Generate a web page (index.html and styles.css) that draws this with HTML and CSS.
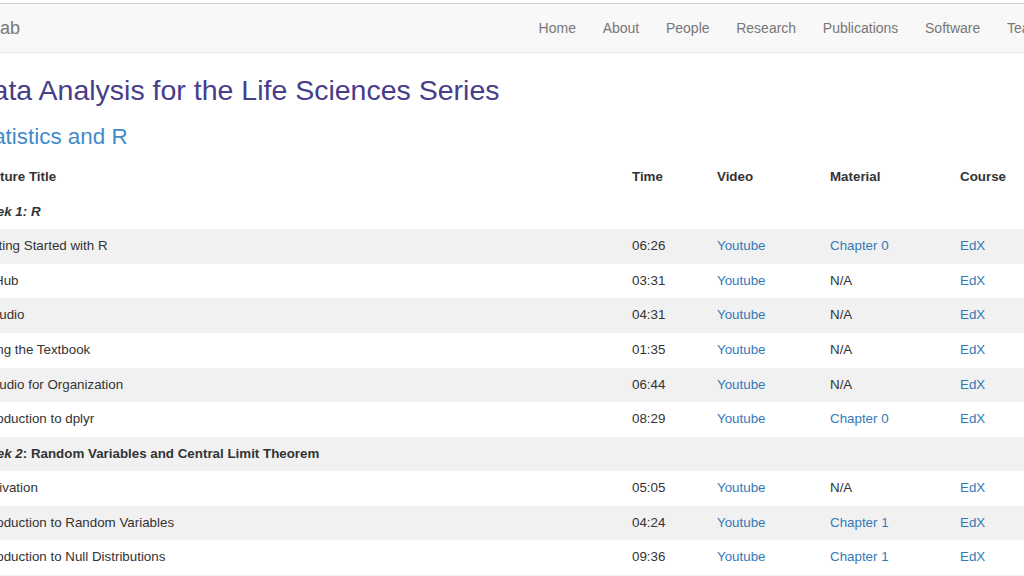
FILE: index.html
```html
<!DOCTYPE html>
<html lang="en">
<head>
<meta charset="utf-8">
<title>Data Analysis for the Life Sciences Series</title>
<link rel="stylesheet" href="styles.css">
</head>
<body>
<nav class="navbar">
  <div class="nav-inner">
    <a class="brand" href="#">Lab</a>
    <ul class="nav">
      <li><a href="#">Home</a></li>
      <li><a href="#">About</a></li>
      <li><a href="#">People</a></li>
      <li><a href="#">Research</a></li>
      <li><a href="#">Publications</a></li>
      <li><a href="#">Software</a></li>
      <li><a href="#">Teaching</a></li>
    </ul>
  </div>
</nav>
<main class="container">
  <h1 class="title">Data Analysis for the Life Sciences Series</h1>
  <h2 class="subtitle">Statistics and R</h2>
  <table class="lectures">
    <colgroup>
      <col class="c-title"><col class="c-time"><col class="c-video"><col class="c-mat"><col class="c-course">
    </colgroup>
    <thead>
      <tr><th>Lecture Title</th><th>Time</th><th>Video</th><th>Material</th><th>Course</th></tr>
    </thead>
    <tbody>
      <tr class="week"><td colspan="5"><em>Week 1: R</em></td></tr>
      <tr class="odd"><td>Getting Started with R</td><td>06:26</td><td><a href="#">Youtube</a></td><td><a href="#">Chapter 0</a></td><td><a href="#">EdX</a></td></tr>
      <tr><td>GitHub</td><td>03:31</td><td><a href="#">Youtube</a></td><td>N/A</td><td><a href="#">EdX</a></td></tr>
      <tr class="odd"><td>RStudio</td><td>04:31</td><td><a href="#">Youtube</a></td><td>N/A</td><td><a href="#">EdX</a></td></tr>
      <tr><td>Using the Textbook</td><td>01:35</td><td><a href="#">Youtube</a></td><td>N/A</td><td><a href="#">EdX</a></td></tr>
      <tr class="odd"><td>RStudio for Organization</td><td>06:44</td><td><a href="#">Youtube</a></td><td>N/A</td><td><a href="#">EdX</a></td></tr>
      <tr><td>Introduction to dplyr</td><td>08:29</td><td><a href="#">Youtube</a></td><td><a href="#">Chapter 0</a></td><td><a href="#">EdX</a></td></tr>
      <tr class="week odd"><td colspan="5"><em>Week 2</em>: Random Variables and Central Limit Theorem</td></tr>
      <tr><td>Motivation</td><td>05:05</td><td><a href="#">Youtube</a></td><td>N/A</td><td><a href="#">EdX</a></td></tr>
      <tr class="odd"><td>Introduction to Random Variables</td><td>04:24</td><td><a href="#">Youtube</a></td><td><a href="#">Chapter 1</a></td><td><a href="#">EdX</a></td></tr>
      <tr><td>Introduction to Null Distributions</td><td>09:36</td><td><a href="#">Youtube</a></td><td><a href="#">Chapter 1</a></td><td><a href="#">EdX</a></td></tr>
      <tr class="odd"><td>Probability Distributions</td><td>05:56</td><td><a href="#">Youtube</a></td><td><a href="#">Chapter 1</a></td><td><a href="#">EdX</a></td></tr>
    </tbody>
  </table>
</main>
</body>
</html>
```

FILE: styles.css
```css
html, body {
  margin: 0;
  padding: 0;
}
body {
  overflow: hidden;
  font-family: "Liberation Sans", Arial, sans-serif;
  font-size: 13px;
  line-height: 1.42857;
  color: #333;
  background: #fff;
}
a {
  text-decoration: none;
  color: #337ab7;
}
.navbar {
  margin-top: 3px;
  height: 48px;
  background: #f8f8f8;
  border-top: 1px solid #d2d2d2;
  border-bottom: 1px solid #e7e7e7;
}
.nav-inner {
  width: 1109px;
  height: 48px;
  margin-left: -31px;
  display: flex;
  align-items: center;
  justify-content: space-between;
}
.brand {
  margin-left: 21px;
  font-size: 18px;
  line-height: 20px;
  color: #777;
}
.nav {
  display: flex;
  list-style: none;
  margin: 0;
  padding: 0;
  font-size: 14px;
  line-height: 20px;
}
.nav a {
  display: block;
  padding: 14px 13.35px;
  color: #777;
}
.nav li:last-child a {
  padding-right: 15px;
}
.container {
  width: 1110px;
  margin-left: -28px;
}
.title {
  margin: 22px 0 0;
  font-size: 28.5px;
  line-height: 1.1;
  font-weight: 500;
  color: #483d8b;
}
.subtitle {
  margin: 18.7px 0 0;
  font-size: 22.4px;
  line-height: 1.1;
  font-weight: 500;
  color: #428bca;
}
.lectures {
  margin: 10.5px 0 0 -3px;
  width: 1110px;
  border-collapse: collapse;
  border-spacing: 0;
  font-size: 13.35px;
  line-height: 18.57px;
}
.c-title { width: 655px; }
.c-time { width: 85px; }
.c-video { width: 113px; }
.c-mat { width: 130px; }
.lectures th,
.lectures td {
  padding: 8px;
  text-align: left;
  vertical-align: top;
}
.lectures th {
  font-weight: bold;
}
.lectures tr.odd {
  background: #f1f1f1;
}
.lectures tr.week td {
  font-weight: bold;
}
```
